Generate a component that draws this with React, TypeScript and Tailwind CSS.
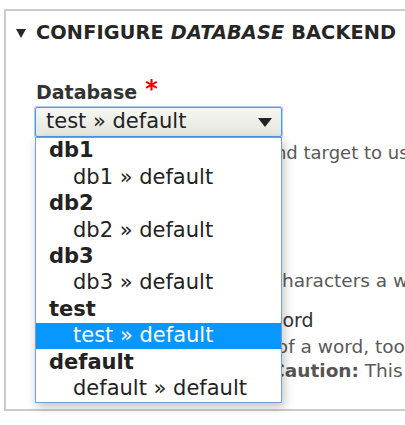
import React from 'react';

type Row = { label: string; group?: boolean; selected?: boolean };

const rows: Row[] = [
  { label: 'db1', group: true },
  { label: 'db1 » default' },
  { label: 'db2', group: true },
  { label: 'db2 » default' },
  { label: 'db3', group: true },
  { label: 'db3 » default' },
  { label: 'test', group: true },
  { label: 'test » default', selected: true },
  { label: 'default', group: true },
  { label: 'default » default' },
];

const font = { fontFamily: '"DejaVu Sans", Verdana, sans-serif' };

const DownTriangle: React.FC<{ className?: string }> = ({ className }) => (
  <svg viewBox="0 0 10 9" preserveAspectRatio="none" className={className} fill="currentColor">
    <path d="M0 0h10L5 9z" />
  </svg>
);

export default function App() {
  return (
    <div className="relative w-[405px] h-[425px] overflow-hidden bg-white" style={font}>
      {/* Fieldset */}
      <div className="ml-[4px] mt-[9px] w-[600px] h-[402px] border-2 border-[#cccccc] bg-white">
        <div className="h-[44px] flex items-center pl-[10px] gap-[10px] text-[#262626]">
          <DownTriangle className="w-[10px] h-[9px]" />
          <span className="text-[19.3px] font-bold uppercase whitespace-nowrap tracking-[0.15px]">
            Configure <em className="italic">Database</em> Backend
          </span>
        </div>

        <div className="pl-[30px]">
          <div className="mt-[22px] h-[30px] flex items-center text-[19px] font-bold text-[#333]">
            <span>Database</span>
            <span className="ml-[8px] text-[#e00] text-[24px] leading-none -mt-[6px]">*</span>
          </div>

          {/* Select */}
          <div className="relative w-[247px] h-[30px] -ml-[1px] border border-[#4d9be5] rounded-[2px] bg-gradient-to-b from-[#f7f7f3] to-[#e6e6df] flex items-center pl-[10px] text-[21px] text-[#222] shadow-[0_0_0_1px_#a9d0f7]">
            <span className="whitespace-nowrap">test » default</span>
            <DownTriangle className="absolute right-[9px] top-[10px] w-[14px] h-[9px] text-[#222]" />
          </div>

          <div className="h-[30px] flex items-center pl-[5px] text-[18px] text-[#595959] whitespace-nowrap">
            <span>Select the database key and target to use for storing indexing information in.</span>
          </div>

          <div className="h-[99px] pt-[20px]">
            <div className="h-[30px] flex items-center text-[19px] font-bold text-[#333] whitespace-nowrap">
              <span>Minimum word length</span>
            </div>
            <div className="w-[80px] h-[30px] border border-[#ccc] rounded-[2px]" />
          </div>

          <div className="h-[30px] flex items-center text-[18.5px] text-[#595959] whitespace-nowrap">
            <span>The minimum number of characters a word must consist of to be indexed.</span>
          </div>

          <div className="mt-[9px] h-[30px] flex items-center gap-[17px] text-[19px] text-[#333] whitespace-nowrap">
            <span className="w-[16px] h-[16px] border border-[#999] rounded-[2px] bg-white" />
            <span>Search on parts of a word</span>
          </div>

          <div className="h-[24px] flex items-center text-[18.5px] text-[#595959] whitespace-nowrap">
            <span>Find keywords in all parts of a word, too. (E.g., find "database" when searching for "data".)</span>
          </div>
          <div className="h-[24px] flex items-center text-[18.5px] text-[#595959] whitespace-nowrap">
            <span>
              Matching is much slower <strong className="font-bold text-[#555]">Caution:</strong> This can make searches slow.
            </span>
          </div>
        </div>
      </div>

      {/* Open select list */}
      <div className="absolute left-[35px] top-[137px] w-[247px] border border-[#7a9cc9] bg-white shadow-[2px_4px_10px_rgba(0,0,0,0.25)]">
        {rows.map((r, i) => (
          <div
            key={i}
            className={
              r.group
                ? 'h-[26.4px] flex items-center pl-[13px] text-[21px] font-bold text-[#222] whitespace-nowrap'
                : r.selected
                ? 'h-[26.4px] flex items-center pl-[37px] text-[21px] text-white bg-[#0797ff] whitespace-nowrap'
                : 'h-[26.4px] flex items-center pl-[37px] text-[21px] text-[#222] whitespace-nowrap'
            }
          >
            {r.label}
          </div>
        ))}
      </div>
    </div>
  );
}
